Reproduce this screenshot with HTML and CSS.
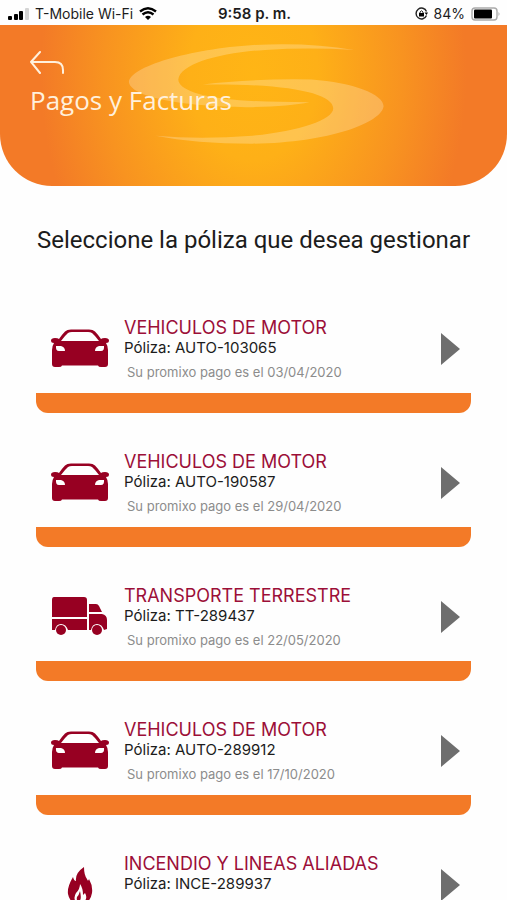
FILE: index.html
```
<!DOCTYPE html>
<html lang="es">

<head>
  <meta charset="UTF-8" />
  <meta name="viewport" content="width=device-width, initial-scale=1.0" />
  <title>Pagos y Facturas</title>
  <link rel="stylesheet" href="styles.css">
</head>

<body>
  <!-- policy icons -->
  <svg class="sprite" aria-hidden="true">
    <symbol id="car" viewBox="0 0 58 40">
      <path fill-rule="evenodd" d="M14 2.500Q16 0.500 20 0.500H38Q42 0.500 44 2.500Q46.500 5 50 10Q51 9 54 9Q58 9 58 11.500Q58 14 55 14Q57 17 57 21V35Q57 38 54 38H50Q47.500 38 47 36.500H11Q10.500 38 8 38H4Q1 38 1 35V21Q1 17 3 14Q0 14 0 11.500Q0 9 4 9Q7 9 8 10Q11.500 5 14 2.500ZM17 4Q14 6.500 10 12H48Q44 6.500 41 4Q39.500 3 37 3H21Q18.500 3 17 4ZM5 17Q4.500 22 8 22H14Q14 18 10 17ZM53 17Q53.500 22 50 22H44Q44 18 48 17Z" />
    </symbol>
    <symbol id="truck" viewBox="0 0 58 40">
      <path d="M3 0H33Q36 0 36 3V20H1V3Q1 0 3 0ZM1 22H36V33H17Q15 27 10 27Q5 27 4 33H1ZM38 7H45Q47 7 48 9L51 15H38ZM38 17H51Q56 18 56 23V32L53 33Q51 27 46 27Q41 27 40 33H38Z" />
      <circle cx="10" cy="33" r="5" />
      <circle cx="46" cy="33" r="5" />
    </symbol>
    <symbol id="fire" viewBox="0 -2 26 40">
      <path fill-rule="evenodd" d="M17 0Q17 8 20 12Q21 15 22 12Q26 19 25 26Q23 37 13 38Q3 37 1 27Q0 20 6 10Q7 14 9 14Q8 6 17 0ZM13 17Q13 22 9 26Q6 31 9 35L13 36L17 35Q21 31 18 26L16 28Q16 21 13 17ZM13 24Q12 28 10 30Q9 34 12 34Q15 33 13 24Z" />
    </symbol>
  </svg>

  <div class="app">
    <div class="status">
      <div class="status-left">
        <svg class="signal" viewBox="0 0 21 12">
          <rect x="0" y="8" width="4" height="4" rx="1" />
          <rect x="6" y="6" width="4" height="6" rx="1" />
          <rect x="11" y="3" width="4" height="9" rx="1" />
          <rect x="17" y="0" width="4" height="12" rx="1" fill="#d4d4d4" />
        </svg>
        <span>T-Mobile Wi-Fi</span>
        <svg class="wifi" viewBox="0 0 18 13">
          <path d="M9 13L6 10Q9 7.500 12 10Z" />
          <path d="M3.500 7.500Q9 3 14.500 7.500M1 4.500Q9 -2 17 4.500" fill="none" stroke="#000" stroke-width="2.400" />
        </svg>
      </div>
      <div class="status-time">9:58 p. m.</div>
      <div class="status-right">
        <svg class="lock" viewBox="0 0 13 13">
          <path d="M11.500 8.500A5.400 5.400 0 1 1 11.500 4.500" fill="none" stroke="#222" stroke-width="1.400" />
          <path d="M9.500 5.500H13L11.500 8Z" />
          <rect x="4" y="6" width="5" height="3.500" />
          <path d="M5 6V5Q6.500 2.500 8 5V6" fill="none" stroke="#222" />
        </svg>
        <span>84%</span>
        <svg class="battery" viewBox="0 0 30 14">
          <rect x="1" y="1" width="25" height="12" rx="3" fill="#fff" stroke="#aaa" stroke-width="1.400" />
          <rect x="3" y="2.500" width="18" height="9" rx="1" />
          <path d="M27.500 5Q29.500 7 27.500 9Z" fill="#aaa" />
        </svg>
      </div>
    </div>

    <header class="header">
      <svg class="logo" viewBox="126 43 262 104" aria-hidden="true">
        <path d="M356 50Q310 42 254 45C190 49 128 67 128 83C131 99 190 108 253 108Q290 107 311 103Q270 103 240 101C200 98 178 90 178 80C180 64 220 53 266 50Q310 47 356 50Z" />
        <path d="M203 85Q250 79 313 80C355 83 386 95 386 107C384 124 330 144 253 145Q195 145 155 137Q200 141 253 137C300 132 335 121 335 109C334 94 290 84 203 85Z" />
      </svg>
      <button class="back" type="button" aria-label="Volver">
        <svg viewBox="0 0 34 24">
          <path d="M10 1L1 11L10 22M1 11H25Q33 11 33 19V22" />
        </svg>
      </button>
      <h1>Pagos y Facturas</h1>
    </header>

    <main class="content">
      <h2>Seleccione la póliza que desea gestionar</h2>
      <ul class="list">
        <li>
          <a class="card" href="#">
            <svg class="icon"><use href="#car" /></svg>
            <div class="info">
              <h3>VEHICULOS DE MOTOR</h3>
              <p class="policy">Póliza: AUTO-103065</p>
              <p class="payment">Su promixo pago es el 03/04/2020</p>
            </div>
            <span class="arrow"></span>
          </a>
        </li>
        <li>
          <a class="card" href="#">
            <svg class="icon"><use href="#car" /></svg>
            <div class="info">
              <h3>VEHICULOS DE MOTOR</h3>
              <p class="policy">Póliza: AUTO-190587</p>
              <p class="payment">Su promixo pago es el 29/04/2020</p>
            </div>
            <span class="arrow"></span>
          </a>
        </li>
        <li>
          <a class="card" href="#">
            <svg class="icon"><use href="#truck" /></svg>
            <div class="info">
              <h3>TRANSPORTE TERRESTRE</h3>
              <p class="policy">Póliza: TT-289437</p>
              <p class="payment">Su promixo pago es el 22/05/2020</p>
            </div>
            <span class="arrow"></span>
          </a>
        </li>
        <li>
          <a class="card" href="#">
            <svg class="icon"><use href="#car" /></svg>
            <div class="info">
              <h3>VEHICULOS DE MOTOR</h3>
              <p class="policy">Póliza: AUTO-289912</p>
              <p class="payment">Su promixo pago es el 17/10/2020</p>
            </div>
            <span class="arrow"></span>
          </a>
        </li>
        <li>
          <a class="card" href="#">
            <svg class="icon"><use href="#fire" /></svg>
            <div class="info">
              <h3>INCENDIO Y LINEAS ALIADAS</h3>
              <p class="policy">Póliza: INCE-289937</p>
            </div>
            <span class="arrow"></span>
          </a>
        </li>
      </ul>
    </main>
  </div>
</body>

</html>
```
FILE: styles.css
```
* {
  margin: 0;
  padding: 0;
  box-sizing: border-box;
}

body {
  font-family: Inter, "Liberation Sans", sans-serif;
  background: #fefefe;
  color: #1c1c1c;
}

ul {
  list-style: none;
}

.sprite {
  position: absolute;
  width: 0;
  height: 0;
}

.app {
  display: flex;
  flex-direction: column;
  height: 100vh;
}

/* status bar */
.status {
  display: grid;
  grid-template-columns: 1fr auto 1fr;
  align-items: center;
  flex: none;
  height: 25px;
  padding: 2px 6px 0 8px;
  font-size: 14px;
  line-height: 20px;
}

.status-left,
.status-right {
  display: flex;
  align-items: center;
  gap: 6px;
}

.status-right {
  justify-content: flex-end;
}

.status-time {
  font-size: 15px;
  font-weight: 600;
}

.signal {
  width: 21px;
  height: 12px;
}

.wifi {
  width: 18px;
  height: 13px;
}

.lock {
  width: 13px;
  height: 13px;
}

.battery {
  width: 30px;
  height: 14px;
}

/* header */
.header {
  position: relative;
  flex: none;
  padding: 26px 30px 69px;
  border-radius: 0 0 52px 52px;
  background: radial-gradient(ellipse 42% 180% at 50% 30%, #ffb515 0%, #feb017 30%, #f89320 70%, #f37a27 100%);
}

.logo {
  position: absolute;
  top: 18px;
  left: 25%;
  width: 51%;
  fill: #fff;
  fill-opacity: 0.24;
}

.back {
  position: relative;
  display: block;
  width: 34px;
  height: 24px;
  border: none;
  background: none;
  cursor: pointer;
}

.back svg {
  display: block;
  fill: none;
  stroke: #fff0dc;
  stroke-width: 2;
  stroke-linecap: round;
}

.header h1 {
  position: relative;
  margin-top: 8px;
  font: 400 26px/34px "Open Sans", sans-serif;
  color: #fff0dc;
}

/* policies */
.content {
  flex: 1;
  overflow-y: auto;
  padding: 38px 36px 0;
  scrollbar-width: none;
}

.content h2 {
  font: 400 24px/32px Roboto, sans-serif;
  text-align: center;
}

.list {
  display: grid;
  gap: 24px;
  margin-top: 47px;
}

.card {
  display: flex;
  height: 110px;
  padding: 14px 11px 0 15px;
  border-bottom: 20px solid #f37a27;
  border-radius: 0 0 12px 12px;
  color: inherit;
  text-decoration: none;
}

.icon {
  flex: none;
  width: 58px;
  height: 40px;
  margin-top: 12px;
  fill: #970022;
}

.info {
  flex: 1;
  margin-left: 15px;
}

.info h3 {
  font-size: 18px;
  font-weight: 400;
  line-height: 22px;
  color: #9c0f38;
}

.policy {
  font-size: 15px;
  line-height: 18px;
}

.payment {
  margin-top: 6px;
  padding-left: 3px;
  font-size: 13px;
  line-height: 18px;
  color: #8c8c8c;
}

/* right pointing triangle */
.arrow {
  flex: none;
  align-self: flex-start;
  margin-top: 16px;
  border: solid transparent;
  border-width: 16px 0 16px 19px;
  border-left-color: #6e6e6e;
}
```
